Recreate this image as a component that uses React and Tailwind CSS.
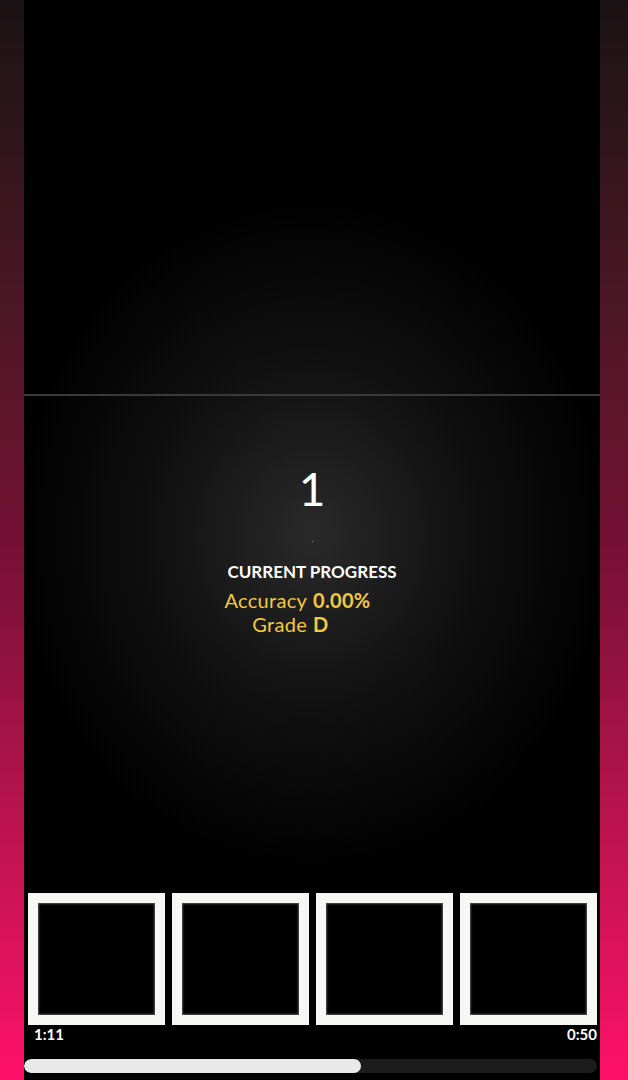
import React from 'react';

const tiles = [0, 1, 2, 3];

function SideBar({ width }) {
  return <div className={`${width} shrink-0 bg-gradient-to-b from-[#1a1214] via-[#741034] to-[#ff1068]`} />;
}

function Tile() {
  return (
    <div className="h-[132px] border-[10px] border-[#f7f7f5] bg-black shadow-[inset_0_0_2px_1px_rgba(140,140,140,0.6)]" />
  );
}

export default function App() {
  return (
    <div className="flex h-[1080px] w-[628px] bg-black font-['Lato',sans-serif]">
      <SideBar width="w-[24px]" />
      <main className="flex w-[576px] shrink-0 flex-col bg-[radial-gradient(ellipse_300px_340px_at_50%_535px,#2a2a2a_0%,#111111_50%,#000000_100%)]">
        <div className="h-[394px]" />
        <div className="h-[2px] bg-[#3a3a3a]" />

        <div className="flex flex-1 flex-col items-center">
          <div className="mt-[70px] text-[46px] font-normal leading-none text-white">1</div>
          <div className="mt-[29px] h-px w-px bg-[#888]" />
          <h2 className="mt-[20px] text-[17px] font-bold leading-[20px] text-white">CURRENT PROGRESS</h2>
          <div className="mt-[6px] mr-[29px] grid grid-cols-[auto_auto] gap-x-[6px] text-[20px] leading-[24px] tracking-[0.3px] text-[#f5c93f]">
            <span className="text-right">Accuracy</span>
            <span className="font-bold">0.00%</span>
            <span className="text-right">Grade</span>
            <span className="font-bold">D</span>
          </div>
        </div>

        <div className="mt-[2px] grid grid-cols-4 gap-[7px] pl-[4px] pr-[3px]">
          {tiles.map((t) => (
            <Tile key={t} />
          ))}
        </div>
        <div className="flex justify-between pl-[10px] pr-[3px] pt-[1px] text-[15px] font-bold leading-[17px] text-white">
          <span>1:11</span>
          <span>0:50</span>
        </div>
        <div className="mt-[16px] mb-[7px] mr-[3px] flex h-[14px] overflow-hidden rounded-full bg-[#1c1c1c]">
          <div className="h-full w-[337px] rounded-full bg-[#e9e9e9]" />
        </div>
      </main>
      <SideBar width="w-[28px]" />
    </div>
  );
}
